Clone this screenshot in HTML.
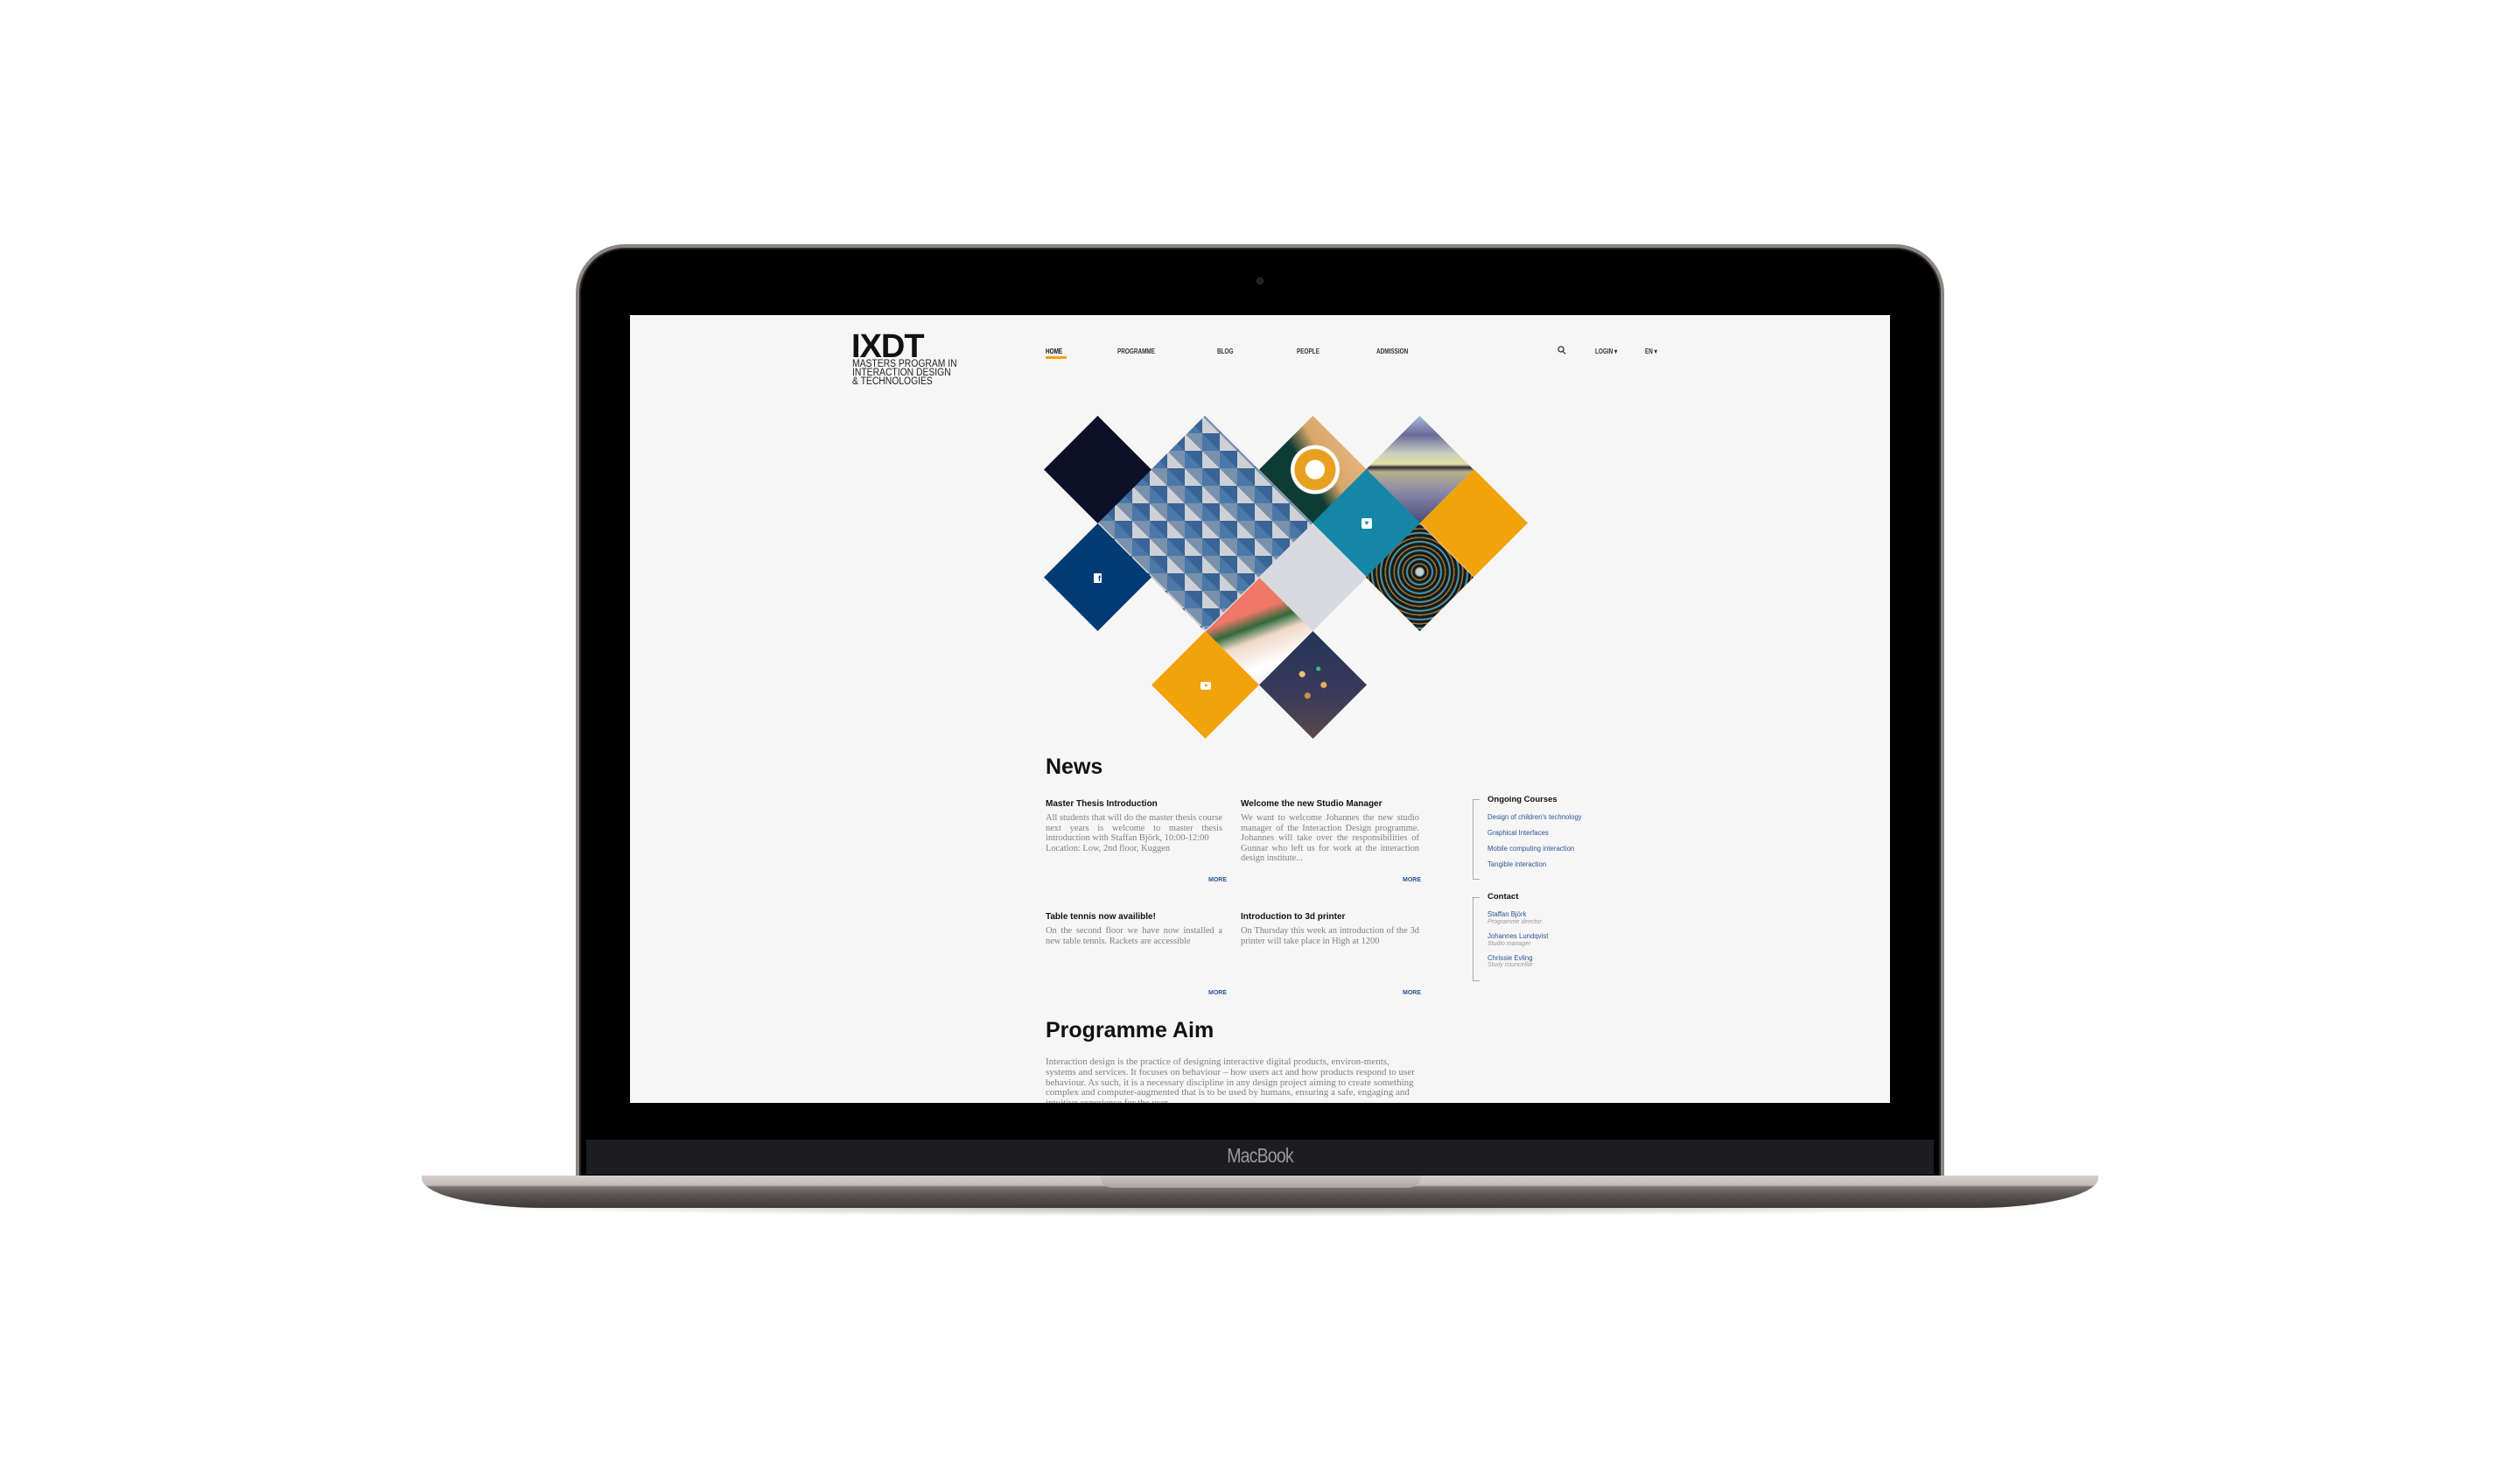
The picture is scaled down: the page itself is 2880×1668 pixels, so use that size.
<!DOCTYPE html>
<html><head><meta charset="utf-8"><style>
*{margin:0;padding:0;box-sizing:border-box}
body{width:2880px;height:1668px;background:#fff;position:relative;overflow:hidden;font-family:"Liberation Sans",sans-serif}
.a{position:absolute}
.lid{left:658px;top:279px;width:1564px;height:1066px;background:#000;border-radius:56px 56px 0 0;border:4px solid #8c8684;border-bottom:none;box-shadow:inset 0 0 0 2px #2a2827}
.screen{left:720px;top:360px;width:1440px;height:900px;background:#f6f6f6;overflow:hidden}
.chin{left:670px;top:1302px;width:1540px;height:40px;background:#1d1c20}
.base{left:482px;top:1343px;width:1916px;height:37px;border-radius:0 0 140px 140px/0 0 34px 34px;background:linear-gradient(#d6d0cd 0,#c4bbb7 11px,#7a7371 13px,#5b5553 22px,#3e3a39 37px)}
.notch{left:1257px;top:1343px;width:367px;height:14px;border-radius:0 0 16px 16px;background:linear-gradient(#cfc7c3,#aba19e)}
.shadow{left:490px;top:1378px;width:1900px;height:12px;background:radial-gradient(ellipse at 50% 0,rgba(0,0,0,.35),rgba(0,0,0,0) 70%)}
.d{position:absolute;clip-path:polygon(50% 0,100% 50%,50% 100%,0 50%)}
.nav{position:absolute;top:397px;font-size:8px;font-weight:bold;color:#333;transform:scaleX(.8);transform-origin:left}
.t{position:absolute;font-size:10px;font-weight:bold;color:#111}
.b{position:absolute;font-family:"Liberation Serif",serif;font-size:10.4px;line-height:11.6px;color:#808080;text-align:justify;width:202px}
.more{position:absolute;font-size:7px;color:#2b5590;font-weight:bold}
.sl{position:absolute;left:1700px;font-size:7.8px;color:#2b5590}
.ss{position:absolute;left:1700px;font-size:7px;color:#999;font-style:italic}
</style></head><body>
<div class="a lid"></div>
<div class="a" style="left:1436px;top:317px;width:8px;height:8px;border-radius:50%;background:#1c1f26;border:1px solid #333"></div>
<div class="a chin"></div>
<div class="a" style="left:1340px;top:1307px;width:200px;text-align:center;font-size:23px;color:#9a989b;letter-spacing:-1px;transform:scaleX(.85)">MacBook</div>
<div class="a shadow"></div>
<div class="a base"></div>
<div class="a notch"></div>

<div class="a screen"></div>
<!-- logo -->
<div class="a" style="left:973px;top:377px;font-size:38px;font-weight:bold;color:#111;letter-spacing:-1px;line-height:38px">IXDT</div>
<div class="a" style="left:974px;top:411px;font-size:11.5px;line-height:10px;color:#222;transform:scaleX(.9);transform-origin:left;white-space:nowrap">MASTERS PROGRAM IN<br>INTERACTION DESIGN<br>&amp; TECHNOLOGIES</div>
<!-- nav -->
<div class="nav" style="left:1195px;color:#111">HOME</div>
<div class="a" style="left:1195px;top:407px;width:24px;height:3px;background:#f0a30a"></div>
<div class="nav" style="left:1277px">PROGRAMME</div>
<div class="nav" style="left:1391px">BLOG</div>
<div class="nav" style="left:1482px">PEOPLE</div>
<div class="nav" style="left:1573px">ADMISSION</div>
<svg class="a" style="left:1780px;top:395px" width="10" height="11" viewBox="0 0 10 11"><circle cx="4" cy="4" r="3" fill="none" stroke="#333" stroke-width="1.3"/><path d="M6 6l3 3.5" stroke="#333" stroke-width="1.3"/></svg>
<div class="nav" style="left:1823px">LOGIN ▾</div>
<div class="nav" style="left:1880px">EN ▾</div>

<!-- diamonds -->
<div class="d" style="left:1254px;top:475px;width:246px;height:246px;background:
linear-gradient(45deg,rgba(60,100,150,.0) 0 50%,rgba(40,80,130,.5) 50% 100%) 0 0/20px 20px,
repeating-conic-gradient(#4a78a8 0 25%,#cdd0d5 0 50%) 0 0/40px 40px,#bbb"></div>
<div class="d" style="left:1439px;top:475px;width:123px;height:123px;background:radial-gradient(circle at 52% 50%,#fff 0 12%,#e8a020 13% 26%,#fff 27% 31%,rgba(0,0,0,0) 32%),linear-gradient(60deg,#0f3b35 0 45%,#d6a66a 60%,#f0c08a)"></div>
<div class="d" style="left:1561px;top:475px;width:123px;height:123px;background:linear-gradient(#a8b8d8 0,#6c6a9a 18%,#c8d0c0 35%,#e8e0a0 45%,#2a2a3a 48%,#b8b08a 52%,#8a8aa8 70%,#4a4a7a)"></div>
<div class="d" style="left:1378px;top:660px;width:123px;height:123px;background:linear-gradient(160deg,#f07868 0 35%,#2f6a3a 45%,#f0d8c8 55%,#fff 75%,#ddd)"></div>
<div class="d" style="left:1193px;top:475px;width:123px;height:123px;background:#0b1028"></div>
<div class="d" style="left:1193px;top:598px;width:123px;height:123px;background:#003b73"></div>
<div class="d" style="left:1500px;top:536px;width:123px;height:123px;background:#1487a7"></div>
<div class="d" style="left:1623px;top:536px;width:123px;height:123px;background:#f0a30a"></div>
<div class="d" style="left:1439px;top:598px;width:123px;height:123px;background:#d8d9de"></div>
<div class="d" style="left:1561px;top:598px;width:123px;height:123px;background:radial-gradient(circle at 50% 45%,#ccc 0 4px,rgba(0,0,0,0) 5px),repeating-radial-gradient(circle at 50% 45%,#1a1a1a 0 3px,#4a9aaa 4px 5px,#1a1a1a 6px 8px,#a07a30 9px 10px),#111"></div>
<div class="d" style="left:1316px;top:721px;width:123px;height:123px;background:#f0a30a"></div>
<div class="d" style="left:1439px;top:721px;width:123px;height:123px;background:radial-gradient(circle at 40% 40%,#f0c070 0 3px,transparent 4px),radial-gradient(circle at 60% 50%,#e8b060 0 3px,transparent 4px),radial-gradient(circle at 45% 60%,#c89050 0 3px,transparent 4px),radial-gradient(circle at 55% 35%,#3ac080 0 2px,transparent 3px),linear-gradient(#243458,#3a3a5a 60%,#5a4a4a)"></div>
<!-- icons -->
<div class="a" style="left:1250px;top:655px;width:9px;height:11px;background:#fff;border-radius:1px;color:#003b73;font-size:9px;font-weight:bold;line-height:12px;text-align:right;padding-right:1px">f</div>
<div class="a" style="left:1556px;top:592px;width:12px;height:12px;background:#fff;border-radius:2px;color:#1487a7;font-size:8px;line-height:12px;text-align:center">♥</div>
<div class="a" style="left:1372px;top:779px;width:12px;height:9px;background:#fff;border-radius:2px"></div>
<div class="a" style="left:1377px;top:781px;width:0;height:0;border-left:4px solid #f0a30a;border-top:2.5px solid transparent;border-bottom:2.5px solid transparent"></div>

<!-- News -->
<div class="a" style="left:1195px;top:862px;font-size:25px;font-weight:bold;color:#111">News</div>
<div class="t" style="left:1195px;top:913px">Master Thesis Introduction</div>
<div class="b" style="left:1195px;top:929px">All students that will do the master thesis course next years is welcome to master thesis introduction with Staffan Björk, 10:00-12:00<br>Location: Low, 2nd floor, Kuggen</div>
<div class="more" style="left:1381px;top:1002px">MORE</div>
<div class="t" style="left:1418px;top:913px">Welcome the new Studio Manager</div>
<div class="b" style="left:1418px;top:929px;width:204px">We want to welcome Johannes the new studio manager of the Interaction Design programme. Johannes will take over the responsibilities of Gunnar who left us for work at the interaction design institute...</div>
<div class="more" style="left:1603px;top:1002px">MORE</div>
<div class="t" style="left:1195px;top:1042px">Table tennis now availible!</div>
<div class="b" style="left:1195px;top:1058px">On the second floor we have now installed a new table tennis. Rackets are accessible</div>
<div class="more" style="left:1381px;top:1131px">MORE</div>
<div class="t" style="left:1418px;top:1042px">Introduction to 3d printer</div>
<div class="b" style="left:1418px;top:1058px;width:204px">On Thursday this week an introduction of the 3d printer will take place in High at 1200</div>
<div class="more" style="left:1603px;top:1131px">MORE</div>

<!-- sidebar -->
<div class="a" style="left:1683px;top:913px;width:8px;height:92px;border:1px solid #aaa;border-right:none"></div>
<div class="t" style="left:1700px;top:908px;font-size:9.5px">Ongoing Courses</div>
<div class="sl" style="top:929px">Design of children's technology</div>
<div class="sl" style="top:947px">Graphical Interfaces</div>
<div class="sl" style="top:965px">Mobile computing interaction</div>
<div class="sl" style="top:983px">Tangible interaction</div>
<div class="a" style="left:1683px;top:1025px;width:8px;height:96px;border:1px solid #aaa;border-right:none"></div>
<div class="t" style="left:1700px;top:1019px;font-size:9.5px">Contact</div>
<div class="sl" style="top:1040px">Staffan Björk</div><div class="ss" style="top:1050px">Programme director</div>
<div class="sl" style="top:1065px">Johannes Lundqvist</div><div class="ss" style="top:1075px">Studio manager</div>
<div class="sl" style="top:1090px">Chrissie Evling</div><div class="ss" style="top:1099px">Study councellor</div>

<!-- Programme aim -->
<div class="a" style="left:1195px;top:1163px;font-size:25px;font-weight:bold;color:#111">Programme Aim</div>
<div class="a" style="left:720px;top:1200px;width:1440px;height:60px;overflow:hidden">
<div class="b" style="left:475px;top:8px;width:428px;text-align:left;font-size:11px;line-height:11.8px">Interaction design is the practice of designing interactive digital products, environ-ments, systems and services. It focuses on behaviour – how users act and how products respond to user behaviour. As such, it is a necessary discipline in any design project aiming to create something complex and computer-augmented that is to be used by humans, ensuring a safe, engaging and intuitive experience for the user.</div>
</div>
</body></html>
